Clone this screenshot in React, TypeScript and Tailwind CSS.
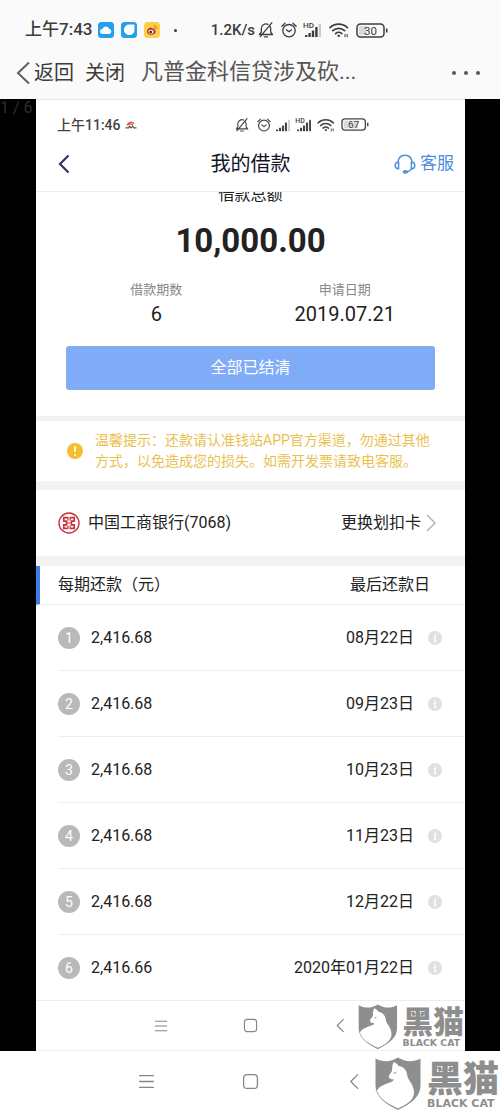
import type { ReactNode } from 'react';

const payments = [
  { amount: '2,416.68', date: '08月22日' },
  { amount: '2,416.68', date: '09月23日' },
  { amount: '2,416.68', date: '10月23日' },
  { amount: '2,416.68', date: '11月23日' },
  { amount: '2,416.68', date: '12月22日' },
  { amount: '2,416.66', date: '2020年01月22日' },
];

function BellOff({ className }: { className: string }) {
  return (
    <svg viewBox="0 0 16 16" className={className} fill="none" stroke="currentColor" strokeWidth="1.3" strokeLinecap="round" strokeLinejoin="round">
      <path d="M1.5 12.5h13l-1.8-2.3V7a4.7 4.7 0 0 0-1-3M10 2.4A4.7 4.7 0 0 0 3.3 7v3.2L1.5 12.5" />
      <path d="M6.4 14.8h3.2M13.8.8 2.2 14.6" />
    </svg>
  );
}

function Alarm({ className }: { className: string }) {
  return (
    <svg viewBox="0 0 16 16" className={className} fill="none" stroke="currentColor" strokeWidth="1.3" strokeLinecap="round" strokeLinejoin="round">
      <circle cx="8" cy="8.7" r="6.2" />
      <path d="m5.5 7.8 2.5 2 2.5-2M.9 4.2 4 1.2M15.1 4.2l-3.1-3" />
    </svg>
  );
}

function Signal({ className, hd, weak }: { className: string; hd?: boolean; weak?: boolean }) {
  return (
    <svg viewBox="0 0 18 16" className={className} fill="currentColor" overflow="visible">
      {hd && (
        <text x="-1" y="6" fontSize="8" fontWeight="500" fontFamily="Roboto, sans-serif">HD</text>
      )}
      <rect x="1" y="13" width="2.4" height="2" rx=".5" />
      <rect x="4.4" y="11" width="2.4" height="4" rx=".5" />
      <rect x="7.8" y="8.5" width="2.4" height="6.5" rx=".5" />
      <rect x="11.2" y="5" width="2.4" height="10" rx=".5" />
      <rect x="14.8" y="2" width="2.2" height="13" rx=".5" opacity={weak ? 0.25 : 1} />
    </svg>
  );
}

function Wifi({ className }: { className: string }) {
  return (
    <svg viewBox="0 0 20 16" className={className} fill="none" stroke="currentColor" strokeWidth="1.7" strokeLinecap="round">
      <path d="M1 5.6a12.5 12.5 0 0 1 17.4 0M3.8 8.7a8.6 8.6 0 0 1 11.8 0M6.6 11.6a4.6 4.6 0 0 1 6.2 0" />
      <circle cx="9.7" cy="13.8" r=".8" fill="currentColor" strokeWidth="1" />
      <path d="M16 12.4v2.4M18.2 12.4v2.4" strokeWidth="1" />
    </svg>
  );
}

function Battery({ level, className }: { level: number; className: string }) {
  return (
    <svg viewBox="0 0 32 15" className={className} fill="none" stroke="currentColor">
      <rect x="3" y="3" width={level / 4} height="9" fill="#d9d9d9" stroke="none" />
      <rect x="1" y="1" width="27" height="13" rx="3.5" strokeWidth="1.5" />
      <path d="M30.7 5.5v4" strokeWidth="1.6" />
      <text x="14.5" y="11.6" textAnchor="middle" fontSize="11.5" fontFamily="Roboto, sans-serif" fill="currentColor" stroke="none">{level}</text>
    </svg>
  );
}

function Headset() {
  return (
    <svg viewBox="0 0 22 20" className="h-5 w-[22px]" fill="none" stroke="currentColor" strokeWidth="1.5" strokeLinecap="round">
      <path d="M4 8.5C4.3 4 7 1.2 11 1.2s6.700 2.800 7 7.300" />
      <path d="M4.600 8.300v6.400C2.500 14.700 1.200 13.400 1.200 11.500s1.300-3.200 3.400-3.200ZM17.400 8.300v6.400c2.100 0 3.400-1.300 3.400-3.200s-1.300-3.200-3.400-3.200Z" />
      <path d="M17.400 14.700c-.8 1.800-2.200 2.700-4 3" />
      <ellipse cx="11.300" cy="17.800" rx="2" ry="1.100" fill="currentColor" />
    </svg>
  );
}

function BankLogo() {
  return (
    <svg viewBox="0 0 22 22" className="size-[22px] shrink-0" fill="none" stroke="#c8323c">
      <circle cx="11" cy="11" r="10" strokeWidth="1.4" />
      <path d="M9.9 5.700H5.800v3.500h2.700v3.600H5.800v3.500h4.100M12.100 5.700h4.100v3.500h-2.700v3.600h2.700v3.500h-4.100" strokeWidth="1.700" />
      <path d="M8 11h6M9.900 5v3.500M12.100 5v3.500M9.900 13.500V17M12.100 13.500V17" strokeWidth="1.200" />
    </svg>
  );
}

function BlackCat({ className }: { className: string }) {
  return (
    <svg viewBox="0 0 125 54" className={className} fill="#8e8e8e" role="img" aria-label="黑猫 BLACK CAT">
      <path d="M.5 1.500C8 5.500 16 5 23 .500c7 4.500 15 5 22.500 1v27c0 11-9 18-22.500 24.500C9.500 46.500.5 39.500.5 28.500Z" />
      <path
        fill="#fff"
        d="M18.700 5c2 .8 3.800 2.200 5 4 5.600.8 8 4.500 8.600 9.500.5 5 6.700 8.500 6.700 17 0 7-6 11.500-16 16C12.500 46.500 4 41.500 2 33.500c2.500-5 9-6.500 14-8.500 1.800-.8 2.700-1.700 2.500-2.800-1.800.2-3.600-.3-4.700-1.700l.2-2.300c1.800-2 3.300-3.700 3.200-6.200-.1-2.500.3-4.700 1.500-7Z"
      />
      <path d="m18 16.300 3.700-1.700-1.300 2Z" />
      <text x="52" y="34.500" fontSize="36" fontWeight="900" fontFamily="'Noto Sans CJK SC', sans-serif">黑猫</text>
      <text x="52" y="49.500" fontSize="11" fontWeight="700" fontFamily="'DejaVu Sans', sans-serif">BLACK CAT</text>
    </svg>
  );
}

function NavKeys({ className, children }: { className: string; children: ReactNode }) {
  return <nav className={`relative flex items-center text-[#858585] ${className}`}>{children}</nav>;
}

function KeyIcon({ d, className }: { d: string; className: string }) {
  return (
    <svg viewBox="0 0 16 16" className={className} fill="none" stroke="currentColor" strokeWidth="1.2" strokeLinecap="round" strokeLinejoin="round">
      <path d={d} />
    </svg>
  );
}

const MENU = 'M1.5 2.5h13M1.5 8h13M1.5 13.5h13';
const HOME = 'M4.5 1.5h7a3 3 0 0 1 3 3v7a3 3 0 0 1-3 3h-7a3 3 0 0 1-3-3v-7a3 3 0 0 1 3-3Z';
const BACK = 'M11 1.5 4.5 8l6.500 6.500';

function LoanScreen() {
  return (
    <div className="relative bg-white text-[#222]">
      <div className="flex h-[42px] items-center border-t border-[#e6e6e6] pt-2 pl-[21px] text-[#444]">
        <span className="text-sm font-medium">上午11:46</span>
        <svg viewBox="0 0 12 8" className="ml-1 h-2 w-3" fill="none">
          <path d="M2 4.500C3 1 7 0 9 3M3 4c2-2 4-1 5 .500" stroke="#d9534f" strokeWidth="1.300" />
          <path d="M.5 6.800h3l1-1.500 1.500 1.500 1.500-1.500L9 6.800h2.500" stroke="#555" strokeWidth="1.200" />
        </svg>
        <div className="mr-24 ml-auto flex items-center gap-1">
          <BellOff className="mr-1 size-[14px]" />
          <Alarm className="size-[14px]" />
          <Signal className="h-[14px] w-4" weak />
          <Signal className="h-[14px] w-[18px]" hd />
          <Wifi className="h-[14px] w-[18px]" />
          <Battery className="ml-0.5 h-[13px] w-7" level={67} />
        </div>
      </div>

      <header className="grid h-[51px] grid-cols-3 items-center border-b border-[#eee] px-[11px] pb-1">
        <button aria-label="返回" className="ml-2 w-6 text-[#2d3560]">
          <svg viewBox="0 0 20 20" className="size-5" fill="none" stroke="currentColor" strokeWidth="2.2">
            <path d="M13.5 1.5 5 10l8.5 8.5" />
          </svg>
        </button>
        <h1 className="text-center text-xl text-[#101626]">我的借款</h1>
        <a href="#service" className="flex items-center justify-end gap-1 text-[17px] text-[#4d8fdc]">
          <Headset />
          客服
        </a>
      </header>

      {/* scrolled a little, so the first line sits partly under the header */}
      <section className="overflow-hidden pb-[26px] text-center">
        <p className="-mt-[9px] text-base leading-6">借款总额</p>
        <p className="mt-[14px] text-[33px] leading-10 font-bold">10,000.00</p>
        <div className="mt-[19px] grid grid-cols-2 px-[26px]">
          <div>
            <p className="text-[13px] leading-5 text-[#888]">借款期数</p>
            <p className="mt-0.5 text-xl leading-6">6</p>
          </div>
          <div>
            <p className="text-[13px] leading-5 text-[#888]">申请日期</p>
            <p className="mt-0.5 text-xl leading-6">2019.07.21</p>
          </div>
        </div>
        <div className="mt-5 px-[30px]">
          <button className="h-11 w-full rounded-[3px] bg-[#80abf7] text-base text-white">全部已结清</button>
        </div>
      </section>

      <div className="flex items-center gap-3 border-t-[5px] border-[#f2f2f2] py-[9px] pl-[31px]">
        <svg viewBox="0 0 16 16" className="size-4 shrink-0">
          <circle cx="8" cy="8" r="8" fill="#f5be2e" />
          <path d="M8 3.300v5.500M8 11v1.700" stroke="#fff" strokeWidth="1.800" />
        </svg>
        <p className="text-sm leading-[21px] whitespace-nowrap text-[#e9c150]">
          温馨提示：还款请认准钱站APP官方渠道，勿通过其他<br />
          方式，以免造成您的损失。如需开发票请致电客服。
        </p>
      </div>

      <div className="flex h-[75px] items-center border-t-[9px] border-[#f2f2f2] pr-7 pl-[22px] text-base">
        <BankLogo />
        <span className="ml-2">中国工商银行(7068)</span>
        <a href="#card" className="ml-auto flex items-center gap-1">
          更换划扣卡
          <svg viewBox="0 0 12 18" className="h-[18px] w-3" fill="none" stroke="#b5b5b5" strokeWidth="1.5">
            <path d="m2 1 8 8-8 8" />
          </svg>
        </a>
      </div>

      <div className="border-t-[10px] border-[#f2f2f2]">
        <table className="w-full border-separate border-spacing-0 text-base">
          <thead>
            <tr className="h-[39px]">
              <th className="border-b border-l-4 border-b-[#eee] border-l-[#3f7eea] p-0 pl-[18px] text-left font-normal">每期还款（元）</th>
              <th className="border-b border-[#eee] p-0 pr-[35px] text-right font-normal">最后还款日</th>
            </tr>
          </thead>
          <tbody>
            {payments.map((p, i) => (
              <tr key={p.date}>
                <td className={i === payments.length - 1 ? 'p-0' : 'p-0 pl-[22px]'}>
                  <div className={`flex h-[66px] items-center gap-[11px] border-b border-[#eee] ${i === payments.length - 1 ? 'pl-[22px]' : ''}`}>
                    <span className="flex size-[22px] items-center justify-center rounded-full bg-[#b9b9b9] text-sm text-white">{i + 1}</span>
                    {p.amount}
                  </div>
                </td>
                <td className="p-0">
                  <div className="flex h-[66px] items-center justify-end gap-[14px] border-b border-[#eee] pr-[23px]">
                    {p.date}
                    <button aria-label="详情" className="size-[14px]">
                      <svg viewBox="0 0 14 14" className="size-[14px]">
                        <circle cx="7" cy="7" r="7" fill="#e0e0e0" />
                        <path d="M7.500 2.800v1.700M5.600 6h1.700l-.6 4.500h1.700" fill="none" stroke="#fff" strokeWidth="1.400" />
                      </svg>
                    </button>
                  </div>
                </td>
              </tr>
            ))}
          </tbody>
        </table>
      </div>

      <NavKeys className="h-[50px] justify-center gap-[75px] border-b border-[#eee]">
        <button aria-label="菜单"><KeyIcon d={MENU} className="size-[14px]" /></button>
        <button aria-label="主页"><KeyIcon d={HOME} className="size-[15px]" /></button>
        <button aria-label="后退"><KeyIcon d={BACK} className="size-[15px]" /></button>
        <div className="absolute right-0 bottom-0">
          <BlackCat className="h-[46px] w-[107px]" />
        </div>
      </NavKeys>
    </div>
  );
}

export default function App() {
  return (
    <div className="bg-white font-[Roboto,'Noto_Sans_CJK_SC',sans-serif]">
      <div className="bg-[#fafafa] text-[#3c3c3c]">
        <div className="flex h-[46px] items-center pt-[14px] pl-[25px]">
          <span className="text-[17px] font-medium">上午7:43</span>
          <div className="ml-1.5 flex items-center gap-[7px]">
            <svg viewBox="0 0 16 16" className="size-4">
              <rect width="16" height="16" rx="3.5" fill="#20a0ee" />
              <path d="M4.700 12a2.500 2.500 0 0 1-.3-5 3.500 3.500 0 0 1 6.700-.2A2.700 2.700 0 0 1 11.500 12Z" fill="#fff" />
            </svg>
            <svg viewBox="0 0 16 16" className="size-4">
              <rect width="16" height="16" rx="3.5" fill="#20a0ee" />
              <path d="M8.500 2.500h4q1 0 1 1v4a5.300 5.300 0 1 1-5-5Z" fill="#fff" />
            </svg>
            <svg viewBox="0 0 16 16" className="size-4">
              <rect width="16" height="16" rx="3.5" fill="#fbd04f" />
              <path d="M3 9.500C3 7.500 6 5 7.300 5.500c.5.200.5.800.3 1.300 1.500-.6 3-.4 2.700.9 3 1.200 1 5-3.500 5C4.500 12.700 3 11.300 3 9.500Z" fill="#c62828" />
              <ellipse cx="7" cy="9.800" rx="2.700" ry="2" fill="#fff" />
              <circle cx="6.700" cy="10" r="1.300" fill="#222" />
              <path d="M9.700 3.800c2.200-.2 3.500 1.300 3 3.300M10 5.500c1 0 1.500.5 1.200 1.400" fill="none" stroke="#c66a20" strokeWidth=".9" />
            </svg>
          </div>
          <span className="ml-[14px] size-[3px] rounded-full bg-[#3c3c3c]" />
          <div className="mr-[112px] ml-auto flex items-center gap-[7px]">
            <span className="-mr-1 text-[15px] font-medium">1.2K/s</span>
            <BellOff className="size-4" />
            <Alarm className="size-4" />
            <Signal className="h-4 w-[18px]" hd weak />
            <Wifi className="h-4 w-5" />
            <Battery className="h-[15px] w-8" level={30} />
          </div>
        </div>
        <header className="flex h-[53px] items-center pr-5 pl-4 text-xl">
          <button className="flex items-center gap-1">
            <svg viewBox="0 0 14 24" className="h-6 w-[14px]" fill="none" stroke="#606060" strokeWidth="2">
              <path d="M13 1.500 2 12l11 10.500" />
            </svg>
            返回
          </button>
          <button className="ml-[11px]">关闭</button>
          <h2 className="ml-4 text-[22px] text-[#555]">凡普金科信贷涉及砍...</h2>
          <button aria-label="更多" className="ml-auto flex gap-2">
            <span className="size-1 rounded-full bg-[#555]" />
            <span className="size-1 rounded-full bg-[#555]" />
            <span className="size-1 rounded-full bg-[#555]" />
          </button>
        </header>
      </div>

      <main className="relative bg-black pr-[35px] pl-9">
        <span className="absolute top-0 left-0 text-base leading-[18px] whitespace-pre text-[#2e2e2e]">1 / 6</span>
        <LoanScreen />
      </main>

      <NavKeys className="h-[60px] justify-center gap-[87px]">
        <button aria-label="菜单"><KeyIcon d={MENU} className="size-[17px]" /></button>
        <button aria-label="主页"><KeyIcon d={HOME} className="size-[17px]" /></button>
        <button aria-label="后退"><KeyIcon d={BACK} className="size-[17px]" /></button>
        <div className="absolute right-0 bottom-0">
          <BlackCat className="h-[54px] w-[125px]" />
        </div>
      </NavKeys>
    </div>
  );
}
